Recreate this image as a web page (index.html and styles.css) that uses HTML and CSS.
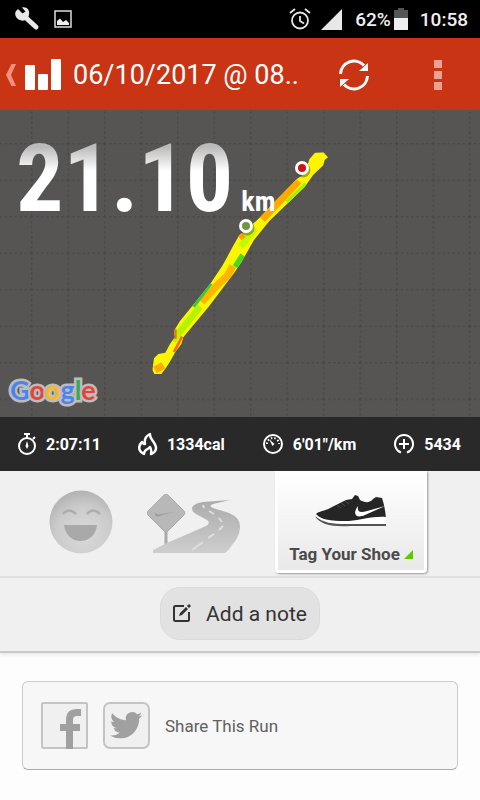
FILE: index.html
```html
<!DOCTYPE html>
<html lang="en">

<head>
	<meta charset="UTF-8">
	<meta name="viewport" content="width=device-width, initial-scale=1">
	<title>06/10/2017</title>
	<link rel="stylesheet" href="styles.css">
</head>

<body>
	<div class="status">
		<svg class="wrench" width="26" height="26" viewBox="0 0 26 26">
			<path d="M10 10L22 21" stroke="#e8e8e8" stroke-width="5" stroke-linecap="round" />
			<path d="M4 3L8.500 7.500L11.500 5.500L8 1.500C13 .5 16 4.500 15 8.500C14.500 13 10 16 6 14C2 13 0 8 2 5Z" fill="#e8e8e8" />
		</svg>
		<svg width="18" height="18" viewBox="0 0 18 18">
			<rect x="1" y="1" width="16" height="16" fill="none" stroke="#ddd" stroke-width="1.500" />
			<path d="M3 15V11L6 8.500L9 12L12 10L15 13V15Z" fill="#eee" />
		</svg>
		<div class="status_right">
			<svg width="22" height="22" viewBox="0 0 22 22" fill="none" stroke="#e8e8e8" stroke-width="1.800">
				<circle cx="11" cy="12.500" r="8" />
				<path d="M11 8V13L15 15.500M1 5L6 1M21 5L16 1" />
			</svg>
			<svg class="signal" width="21" height="21" viewBox="0 0 21 21">
				<path d="M21 0V21H0Z" fill="#e8e8e8" />
			</svg>
			<span>62%</span>
			<svg class="battery" width="14" height="22" viewBox="0 0 14 22">
				<path d="M0 2H4V0H10V2H14V10H0Z" fill="#555" />
				<path d="M0 10H14V22H0Z" fill="#eee" />
			</svg>
			<span class="clock">10:58</span>
		</div>
	</div>

	<header class="bar">
		<button class="back" aria-label="Back">
			<svg width="10" height="22" viewBox="0 0 10 22">
				<path d="M5.500 0H10L5 11L10 22H5.500L0 11Z" fill="#f2927e" />
			</svg>
			<svg width="36" height="32" viewBox="0 0 36 32" fill="#fff">
				<rect x="0" y="6" width="10" height="25" rx="1" />
				<rect x="13" y="15" width="10" height="16" rx="1" />
				<rect x="26" y="0" width="10" height="31" rx="1" />
			</svg>
		</button>
		<h1 class="title">06/10/2017 @ 08..</h1>
		<button class="refresh" aria-label="Refresh">
			<svg width="32" height="32" viewBox="0 0 32 32">
				<path d="M2.500 15A13.500 13.500 0 0 1 26 6.500M29.500 17A13.500 13.500 0 0 1 6 25.500" fill="none" stroke="#fff" stroke-width="3" />
				<path d="M30 4V12H21ZM2 28V20H11Z" fill="#fff" />
			</svg>
		</button>
		<button class="more" aria-label="More">
			<svg width="8" height="30" viewBox="0 0 8 30" fill="#e9a294">
				<rect width="8" height="8" />
				<rect y="11" width="8" height="8" />
				<rect y="22" width="8" height="8" />
			</svg>
		</button>
	</header>

	<div class="map">
		<svg class="map_canvas" viewBox="0 0 480 307" preserveAspectRatio="xMidYMid slice">
			<defs>
				<pattern id="grid" x="-5.500" y="-3.500" width="36.500" height="36.500" patternUnits="userSpaceOnUse">
					<path d="M.5 0V36.500M0 .5H36.500" stroke="#4a4947" stroke-width="2" stroke-dasharray="2.500 2.500" />
				</pattern>
				<clipPath id="route">
					<path d="M525 38L508 58L495 100L470 118L415 174L358 234L328 262L298 285L278 320L262 350L248 376L213 428L160 494L120 543L102 572L105 592L90 612L76 638L55 642L42 655L37 690L43 702L64 702L76 686L88 668L106 636L124 612L130 592L206 500L284 397L304 367L342 300L388 243L494 141L520 104L550 76L554 60L564 52L550 37Z" />
				</clipPath>
			</defs>
			<rect width="480" height="307" fill="url(#grid)" />
			<g transform="translate(140 30) scale(.33333)">
				<g clip-path="url(#route)">
					<rect width="600" height="720" fill="#fbf500" />
					<g fill="none" stroke-width="20">
						<path d="M475 122L366 238" stroke="#ffa800" stroke-width="24" />
						<path d="M498 132L440 186" stroke="#a8f000" stroke-width="12" />
						<path d="M345 265L302 320" stroke="#c2f800" />
						<path d="M308 345L285 380" stroke="#48d820" stroke-width="16" />
						<path d="M312 284L300 295" stroke="#ff9d00" stroke-width="16" />
						<path d="M278 378L262 408L235 432L185 486" stroke="#ffb500" stroke-width="22" />
						<path d="M212 430L160 500" stroke="#35c93e" stroke-width="12" />
						<path d="M180 500L130 562L98 602" stroke="#b4f400" />
						<path d="M106 568V596M126 590L102 636" stroke="#f96a10" stroke-width="8" />
						<path d="M70 676L45 690" stroke="#ffab00" stroke-width="22" />
					</g>
				</g>
			</g>
			<g stroke="#fff" stroke-width="3">
				<circle cx="303" cy="60" r="6" fill="none" stroke="#333" opacity=".4" />
				<circle cx="302" cy="58" r="5.500" fill="#cb1414" />
				<circle cx="247" cy="118" r="6" fill="none" stroke="#333" opacity=".4" />
				<circle cx="246" cy="116" r="5.500" fill="#719447" />
			</g>
		</svg>
		<div class="distance"><span class="number">21.10</span><span class="unit">km</span></div>
		<div class="google"><span class="b">G</span><span class="r">o</span><span class="y">o</span><span class="b">g</span><span class="g">l</span><span class="r">e</span></div>
	</div>

	<ul class="stats">
		<li>
			<svg width="20" height="22" viewBox="0 0 20 22" fill="none" stroke="#fff" stroke-width="2">
				<circle cx="10" cy="13" r="8" />
				<path d="M7 1H13M10 1V5M16 6L18 4" />
				<path d="M10 8L11.500 13L10 16L8.500 13Z" fill="#fff" stroke="none" />
			</svg>
			2:07:11
		</li>
		<li>
			<svg width="20" height="24" viewBox="0 0 20 24" fill="none" stroke="#fff" stroke-width="2.500">
				<path d="M6 22C0 19 0 14 4 10C5 12 6 12 7 12C6 7 8 4 12 2C11 7 18 10 18 16C18 19 16 21 13 22C14 19 13 17 12 15C10 18 6 17 6 22Z" stroke-linejoin="round" />
			</svg>
			1334cal
		</li>
		<li>
			<svg width="22" height="22" viewBox="0 0 22 22" fill="none" stroke="#fff" stroke-width="2">
				<circle cx="11" cy="11" r="9" />
				<path d="M5 11A6 6 0 0 1 17 11" stroke-dasharray="1.500 2" />
				<path d="M7 6L12.500 11L10.500 13Z" fill="#fff" stroke="none" />
			</svg>
			6'01"/km
		</li>
		<li>
			<svg width="22" height="22" viewBox="0 0 22 22" fill="none" stroke="#fff" stroke-width="2">
				<path d="M8 19.500A9 9 0 1 1 14 19.500" />
				<path d="M11 6V16M6 11H16" />
			</svg>
			5434
		</li>
	</ul>

	<main>
		<section class="tags">
			<button class="mood" aria-label="Mood">
				<svg width="64" height="64" viewBox="0 0 64 64">
					<defs>
						<radialGradient id="face" cx=".55" cy=".7" r=".75">
							<stop offset="0" stop-color="#dadada" />
							<stop offset=".6" stop-color="#cbcbcb" />
							<stop offset="1" stop-color="#adadad" />
						</radialGradient>
					</defs>
					<circle cx="32" cy="32" r="31.500" fill="url(#face)" />
					<path d="M14 24Q20 17 27 24M38 24Q44 17 51 24" fill="none" stroke="#adadad" stroke-width="2.500" />
					<path d="M15 35H48C47 45 40 51 31.500 51S16 45 15 35Z" fill="#a9a9a9" />
				</svg>
			</button>
			<button class="road" aria-label="Terrain">
				<svg width="94" height="60" viewBox="0 0 94 60">
					<defs>
						<linearGradient id="asphalt" x1="0" y1="0" x2="0" y2="1">
							<stop offset="0" stop-color="#ababab" />
							<stop offset="1" stop-color="#cecece" />
						</linearGradient>
					</defs>
					<path d="M19 36V52" stroke="#aaa" stroke-width="3" />
					<path d="M6 56L20 49L43 39L59 32Q64 29 60 26L49 20Q43 16 46 12Q49 9 56 8L83 6L66 10Q61 12 66 14L82 19Q94 24 93 34Q92 44 85 51Q82 56 78 59H6Z" fill="url(#asphalt)" />
					<path d="M45 56L56 48M61 44L67 40M72 36L76 32M75 28L72 24M67 20L62 17M57 14L56 11" fill="none" stroke="#dedede" stroke-width="2" />
					<path d="M17 1Q19 -1 21 1L37 17Q39 19 37 21L21 37Q19 39 17 37L1 21Q-1 19 1 17Z" fill="#b8b8b8" stroke="#ababab" />
					<path d="M9 18C6 23 12 23 15 21L28 18L15 20C10 21 8 21 9 18Z" fill="#999" />
				</svg>
			</button>
			<button class="shoe">
				<svg width="72" height="34" viewBox="0 0 72 34">
					<path d="M1 20C4 17 11 17 17 13L31 6L37 5L40 1L43 2L45 6C50 9 55 9 58 5L61 3L67 4C69 10 70 15 71 24L34 29C18 29 8 27 1 20Z" fill="#252525" />
					<path d="M0 21C8 27 22 27 34 27C46 26 58 22 71 23V30H34C20 32 5 30 0 21Z" fill="#fff" />
					<path d="M0 22C8 29 18 30 30 30H71V32H35C18 33 5 31 0 22Z" fill="#555" />
					<path d="M43 12C37 20 41 25 50 21L70 12L52 17C45 19 42 18 43 12Z" fill="#fff" />
					<path d="M22 11L26 14M26 9L30 12M30 7L34 10" stroke="#4a4a4a" fill="none" />
				</svg>
				<span class="shoe_text">Tag Your Shoe<svg width="9" height="9" viewBox="0 0 9 9"><path d="M9 0V9H0Z" fill="#60c800" /></svg></span>
			</button>
		</section>

		<section class="note">
			<button class="add_note">
				<svg width="19" height="19" viewBox="0 0 19 19">
					<path d="M11 2H2.500Q1 2 1 3.500V15.500Q1 17 2.500 17H14.500Q16 17 16 15.500V8" fill="none" stroke="#333" stroke-width="2" />
					<path d="M6 12L7 9L13 3L15 5L9 11ZM14 2L16 0L18 2L16 4Z" fill="#333" />
				</svg>
				Add a note
			</button>
		</section>

		<section class="share">
			<button class="fb" aria-label="Facebook">
				<svg width="47" height="47" viewBox="0 0 47 47">
					<rect x="1" y="1" width="45" height="45" rx="1" fill="#f0f0f0" stroke="#c4c4c4" stroke-width="2" />
					<path d="M28.500 47V18Q28.500 10.500 36 10.500H40M19 25.500H39" fill="none" stroke="#a0a0a0" stroke-width="7" />
				</svg>
			</button>
			<button class="tw" aria-label="Twitter">
				<svg width="47" height="47" viewBox="0 0 47 47">
					<rect x="1" y="1" width="45" height="45" rx="6" fill="#f0f0f0" stroke="#c4c4c4" stroke-width="2" />
					<path transform="translate(7 7) scale(1.350)" fill="#a0a0a0" d="M23.950 4.570a10 10 0 0 1-2.820.770 4.960 4.960 0 0 0 2.160-2.720c-.950.550-2 .960-3.130 1.180a4.920 4.920 0 0 0-8.380 4.480C7.690 8.100 4.070 6.130 1.640 3.160a4.900 4.900 0 0 0 1.520 6.570 4.900 4.900 0 0 1-2.230-.620v.060a4.920 4.920 0 0 0 3.950 4.830 5 5 0 0 1-2.210.080 4.940 4.940 0 0 0 4.600 3.420A9.870 9.870 0 0 1 0 19.540a14 14 0 0 0 7.550 2.210c9.050 0 14-7.500 14-13.980 0-.210 0-.420-.020-.630a9.940 9.940 0 0 0 2.460-2.550z" />
				</svg>
			</button>
			<span>Share This Run</span>
		</section>
	</main>
</body>

</html>
```

FILE: styles.css
```css
* {
	margin: 0;
	padding: 0;
	box-sizing: border-box;
}

body {
	background: #fdfdfd;
	font-family: Roboto, "Liberation Sans", sans-serif;
	color: #333;
}

svg {
	display: block;
	flex: none;
}

button {
	border: 0;
	background: none;
	font-family: inherit;
	color: inherit;
}

/* status bar */
.status {
	display: flex;
	align-items: center;
	height: 38px;
	padding: 0 12px 0 14px;
	background: #000;
	color: #f0f0f0;
	font-size: 19px;
	font-weight: 500;
}

.wrench {
	margin-right: 14px;
}

.status_right {
	display: flex;
	align-items: center;
	margin-left: auto;
}

.signal {
	margin: 0 13px 0 10px;
}

.battery {
	margin: 0 12px 0 3px;
}

/* title bar */
.bar {
	display: flex;
	align-items: center;
	height: 72px;
	padding: 1px 38px 0 6px;
	background: #c93415;
	color: #fff;
}

.back {
	display: flex;
	align-items: center;
	gap: 9px;
	margin-right: 12px;
}

.title {
	flex: 1;
	font-size: 27px;
	font-weight: 400;
	white-space: nowrap;
}

.refresh {
	margin-right: 64px;
}

/* map */
.map {
	position: relative;
	height: 307px;
	background: #575553;
	overflow: hidden;
}

.map_canvas {
	width: 100%;
	height: 100%;
}

.distance {
	position: absolute;
	top: 5px;
	left: 16px;
	display: flex;
	align-items: baseline;
	gap: 8px;
	font-family: "Roboto Condensed", "Liberation Sans Narrow", "Liberation Sans", sans-serif;
	font-weight: 700;
	line-height: 128px;
	color: #fff;
}

.number {
	font-size: 94px;
	background: linear-gradient(#bbb 32px, #fff 56px);
	-webkit-background-clip: text;
	background-clip: text;
	color: transparent;
}

.unit {
	font-size: 28px;
}

.google {
	position: absolute;
	left: 10px;
	bottom: 8px;
	font-family: Lato, sans-serif;
	font-size: 27px;
	font-weight: 700;
	line-height: 38px;
	-webkit-text-stroke: 5px #bdbcbb;
	paint-order: stroke fill;
}

.google .b {
	color: #4a84ee;
}

.google .r {
	color: #e5443b;
}

.google .y {
	color: #f5bb1c;
}

.google .g {
	color: #3aa757;
}

/* stats */
.stats {
	display: flex;
	align-items: center;
	justify-content: space-between;
	height: 54px;
	padding: 0 19px 0 17px;
	background: #292929;
	color: #fff;
	font-size: 16px;
	font-weight: 700;
	list-style: none;
}

.stats li {
	display: flex;
	align-items: center;
	gap: 9px;
}

/* tags */
.tags {
	display: flex;
	align-items: flex-start;
	justify-content: center;
	gap: 34px;
	height: 107px;
	padding-right: 4px;
	background: #f0f0f0;
	border-bottom: 2px solid #e2e2e2;
}

.mood {
	margin-top: 19px;
}

.road {
	margin-top: 23px;
}

.shoe {
	display: flex;
	flex-direction: column;
	align-items: center;
	width: 152px;
	height: 102px;
	padding-top: 23px;
	background: linear-gradient(#fff, #e9e9e9);
	border: solid #fff;
	border-width: 0 3px 3px;
	border-radius: 0 0 4px 4px;
	box-shadow: 1px 1px 2px #999;
	color: #4b4b4b;
	font-size: 17px;
	font-weight: 700;
}

.shoe_text {
	display: flex;
	align-items: center;
	gap: 4px;
	margin-top: 16px;
	white-space: nowrap;
}

/* note */
.note {
	display: flex;
	justify-content: center;
	height: 75px;
	padding: 9px 0 0;
	background: #f0f0f0;
	border-bottom: 2px solid #c9c9c9;
	box-shadow: 0 1px 4px #ddd;
}

.add_note {
	display: flex;
	align-items: center;
	gap: 14px;
	height: 53px;
	padding: 0 12px;
	background: #e2e2e2;
	border: 1px solid #dadada;
	border-radius: 20px;
	font-size: 21px;
}

/* share */
.share {
	display: flex;
	align-items: center;
	gap: 15px;
	height: 89px;
	margin: 28px 22px;
	padding: 0 18px;
	background: #f7f7f7;
	border: 1px solid #ccc;
	border-bottom-color: #aaa;
	border-radius: 6px;
	color: #606060;
	font-size: 17px;
}
```
